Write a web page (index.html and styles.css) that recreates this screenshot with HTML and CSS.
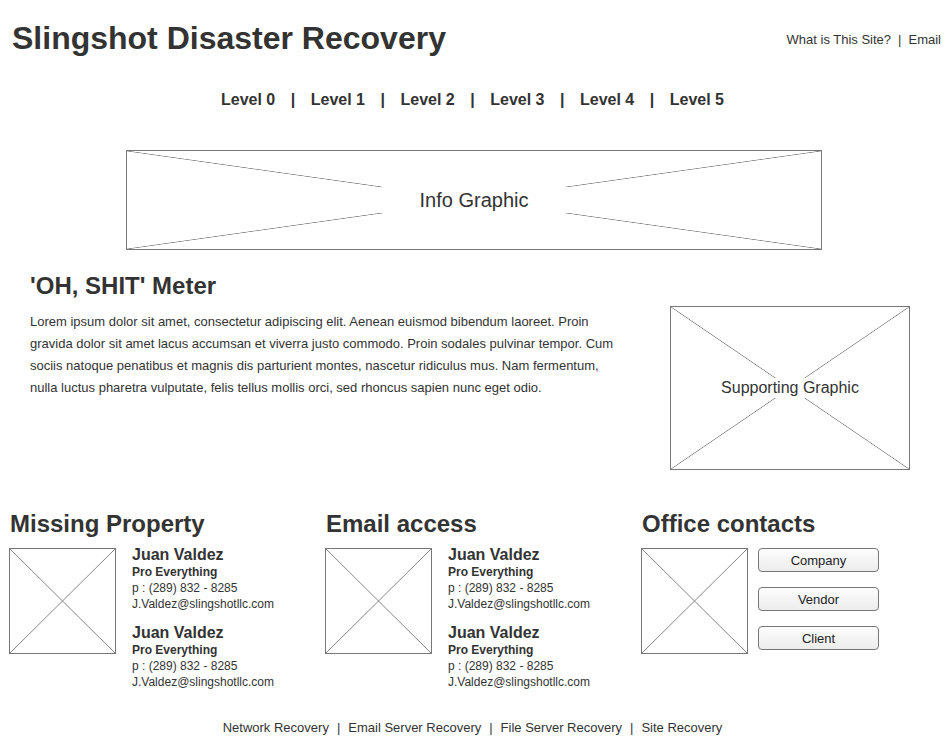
FILE: index.html
```html
<!DOCTYPE html>
<html>
<head>
<meta charset="utf-8">
<title>Slingshot Disaster Recovery</title>
<link rel="stylesheet" href="styles.css">
</head>
<body>
<div class="page">
  <header class="header">
    <h1 class="title">Slingshot Disaster Recovery</h1>
    <div class="toplinks">What is This Site?<span class="sep">|</span>Email</div>
  </header>

  <nav class="nav">
    <span>Level 0</span><span class="bar">|</span>
    <span>Level 1</span><span class="bar">|</span>
    <span>Level 2</span><span class="bar">|</span>
    <span>Level 3</span><span class="bar">|</span>
    <span>Level 4</span><span class="bar">|</span>
    <span>Level 5</span>
  </nav>

  <div class="ph info"><span class="ph-label info-label">Info Graphic</span></div>

  <section class="meter">
    <div class="meter-text">
      <h2 class="meter-title">'OH, SHIT' Meter</h2>
      <p class="meter-body">Lorem ipsum dolor sit amet, consectetur adipiscing elit. Aenean euismod bibendum laoreet. Proin gravida dolor sit amet lacus accumsan et viverra justo commodo. Proin sodales pulvinar tempor. Cum sociis natoque penatibus et magnis dis parturient montes, nascetur ridiculus mus. Nam fermentum, nulla luctus pharetra vulputate, felis tellus mollis orci, sed rhoncus sapien nunc eget odio.</p>
    </div>
    <div class="ph support"><span class="ph-label">Supporting Graphic</span></div>
  </section>

  <section class="cols">
    <div class="col">
      <h2 class="col-title">Missing Property</h2>
      <div class="col-body">
        <div class="ph thumb"></div>
        <div class="contacts">
          <div class="contact">
            <div class="c-name">Juan Valdez</div>
            <div class="c-role">Pro Everything</div>
            <div class="c-line">p : (289) 832 - 8285</div>
            <div class="c-line">J.Valdez@slingshotllc.com</div>
          </div>
          <div class="contact">
            <div class="c-name">Juan Valdez</div>
            <div class="c-role">Pro Everything</div>
            <div class="c-line">p : (289) 832 - 8285</div>
            <div class="c-line">J.Valdez@slingshotllc.com</div>
          </div>
        </div>
      </div>
    </div>
    <div class="col">
      <h2 class="col-title">Email access</h2>
      <div class="col-body">
        <div class="ph thumb"></div>
        <div class="contacts">
          <div class="contact">
            <div class="c-name">Juan Valdez</div>
            <div class="c-role">Pro Everything</div>
            <div class="c-line">p : (289) 832 - 8285</div>
            <div class="c-line">J.Valdez@slingshotllc.com</div>
          </div>
          <div class="contact">
            <div class="c-name">Juan Valdez</div>
            <div class="c-role">Pro Everything</div>
            <div class="c-line">p : (289) 832 - 8285</div>
            <div class="c-line">J.Valdez@slingshotllc.com</div>
          </div>
        </div>
      </div>
    </div>
    <div class="col col-last">
      <h2 class="col-title">Office contacts</h2>
      <div class="col-body">
        <div class="ph thumb"></div>
        <div class="buttons">
          <button class="btn">Company</button>
          <button class="btn">Vendor</button>
          <button class="btn">Client</button>
        </div>
      </div>
    </div>
  </section>

  <footer class="footer">Network Recovery<span class="sep">|</span>Email Server Recovery<span class="sep">|</span>File Server Recovery<span class="sep">|</span>Site Recovery</footer>
</div>
</body>
</html>
```
FILE: styles.css
```css
* { box-sizing: border-box; }
html, body { margin: 0; padding: 0; background: #fff; }
body {
  font-family: "Liberation Sans", Arial, sans-serif;
  color: #333;
}
.page { width: 950px; height: 744px; overflow: hidden; }

.header {
  display: flex;
  justify-content: space-between;
  align-items: flex-start;
  padding: 18px 9px 0 12px;
}
.title {
  margin: 0;
  font-size: 32px;
  line-height: 40px;
  font-weight: bold;
}
.toplinks {
  font-size: 13px;
  line-height: 16px;
  padding-top: 14px;
}
.toplinks .sep { margin: 0 7px; }
.footer .sep { margin: 0 8px; }

.nav {
  display: flex;
  justify-content: center;
  gap: 15.5px;
  font-size: 16px;
  font-weight: bold;
  line-height: 20px;
  margin-top: 32px;
  padding-right: 5px;
}

.ph {
  border: 1px solid #777;
  background:
    linear-gradient(to top right, transparent calc(50% - 0.7px), #858585 50%, transparent calc(50% + 0.7px)),
    linear-gradient(to bottom right, transparent calc(50% - 0.7px), #858585 50%, transparent calc(50% + 0.7px)),
    #fff;
  display: flex;
  align-items: center;
  justify-content: center;
}
.ph-label {
  background: #fff;
  font-size: 16px;
  line-height: 20px;
}
.info {
  width: 696px;
  height: 100px;
  margin: 40px 0 0 126px;
}
.info-label {
  font-size: 20px;
  line-height: 22px;
  padding: 3px 38px 2px;
  margin-top: -2px;
}

.meter {
  display: flex;
  justify-content: space-between;
  align-items: flex-start;
  padding: 0 40px 0 30px;
  margin-top: 22px;
}
.meter-text { width: 592px; }
.meter-title {
  margin: 0;
  font-size: 24px;
  line-height: 28px;
  font-weight: bold;
}
.meter-body {
  margin: 11px 0 0;
  font-size: 13px;
  line-height: 22px;
}
.support {
  width: 240px;
  height: 164px;
  margin-top: 34px;
}

.cols {
  display: flex;
  margin-top: 40px;
  padding-left: 9px;
}
.col { width: 316px; flex: none; }
.col-last { flex: 1 1 auto; width: auto; }
.col-title {
  margin: 0 0 0 1px;
  font-size: 24px;
  line-height: 28px;
  font-weight: bold;
}
.col-body {
  display: flex;
  align-items: flex-start;
  margin-top: 8px;
}
.thumb {
  width: 107px;
  height: 106px;
  flex: none;
  margin-top: 2px;
}
.contacts {
  margin-left: 16px;
  display: flex;
  flex-direction: column;
  gap: 12px;
}
.c-name {
  font-size: 16px;
  line-height: 18px;
  font-weight: bold;
}
.c-role {
  font-size: 12px;
  line-height: 16px;
  font-weight: bold;
}
.c-line {
  font-size: 12px;
  line-height: 16px;
}

.buttons {
  display: flex;
  flex-direction: column;
  gap: 15px;
  margin-left: 10px;
  margin-top: 2px;
}
.btn {
  width: 121px;
  height: 24px;
  border: 1px solid #777;
  border-radius: 4px;
  background: linear-gradient(#fdfdfd, #ececec);
  font-family: "Liberation Sans", Arial, sans-serif;
  font-size: 13px;
  color: #222;
  padding: 0;
}

.footer {
  text-align: center;
  font-size: 13px;
  line-height: 16px;
  margin-top: 30px;
  padding-right: 5px;
}
```
